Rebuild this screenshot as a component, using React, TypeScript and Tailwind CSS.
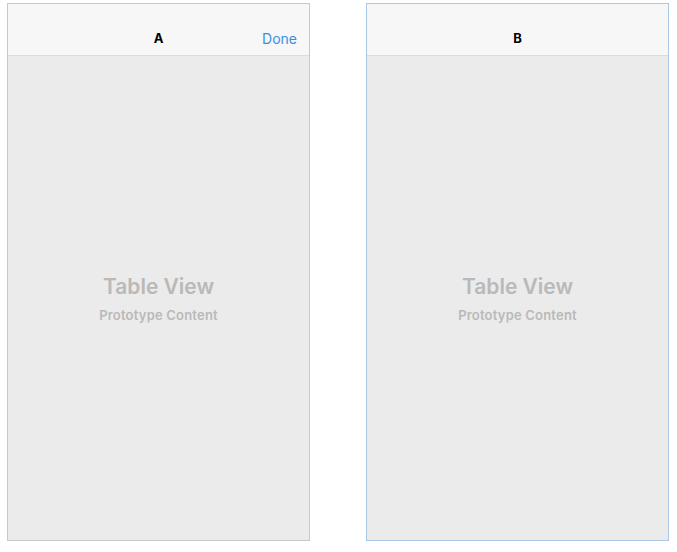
function Scene({ title, done, selected }: { title: string; done?: boolean; selected?: boolean }) {
  return (
    <div
      className={`flex h-[538px] w-[303px] flex-col border ${
        selected ? "border-[#a9c7e6]" : "border-[#c9c9c9]"
      }`}
    >
      <div className="relative flex h-[52px] shrink-0 items-end justify-center border-b border-[#dcdcdc] bg-[#f7f7f7] pb-[7px]">
        <span className="text-[13px] font-bold text-black">{title}</span>
        {done ? (
          <span className="absolute right-[12px] bottom-[6px] text-[14px] text-[#3a8fe6]">Done</span>
        ) : null}
      </div>
      <div className="flex flex-1 flex-col items-center justify-center bg-[#ebebeb] pt-[2px]">
        <div className="text-[21px] font-semibold leading-[28px] text-[#b9b9b9]">Table View</div>
        <div className="mt-[5px] text-[13px] font-semibold tracking-[0.2px] text-[#b9b9b9]">Prototype Content</div>
      </div>
    </div>
  );
}

export default function App() {
  return (
    <div className="flex h-[552px] w-[677px] gap-[56px] bg-white pl-[7px] pt-[3px] font-['Inter',sans-serif]">
      <Scene title="A" done />
      <Scene title="B" selected />
    </div>
  );
}
